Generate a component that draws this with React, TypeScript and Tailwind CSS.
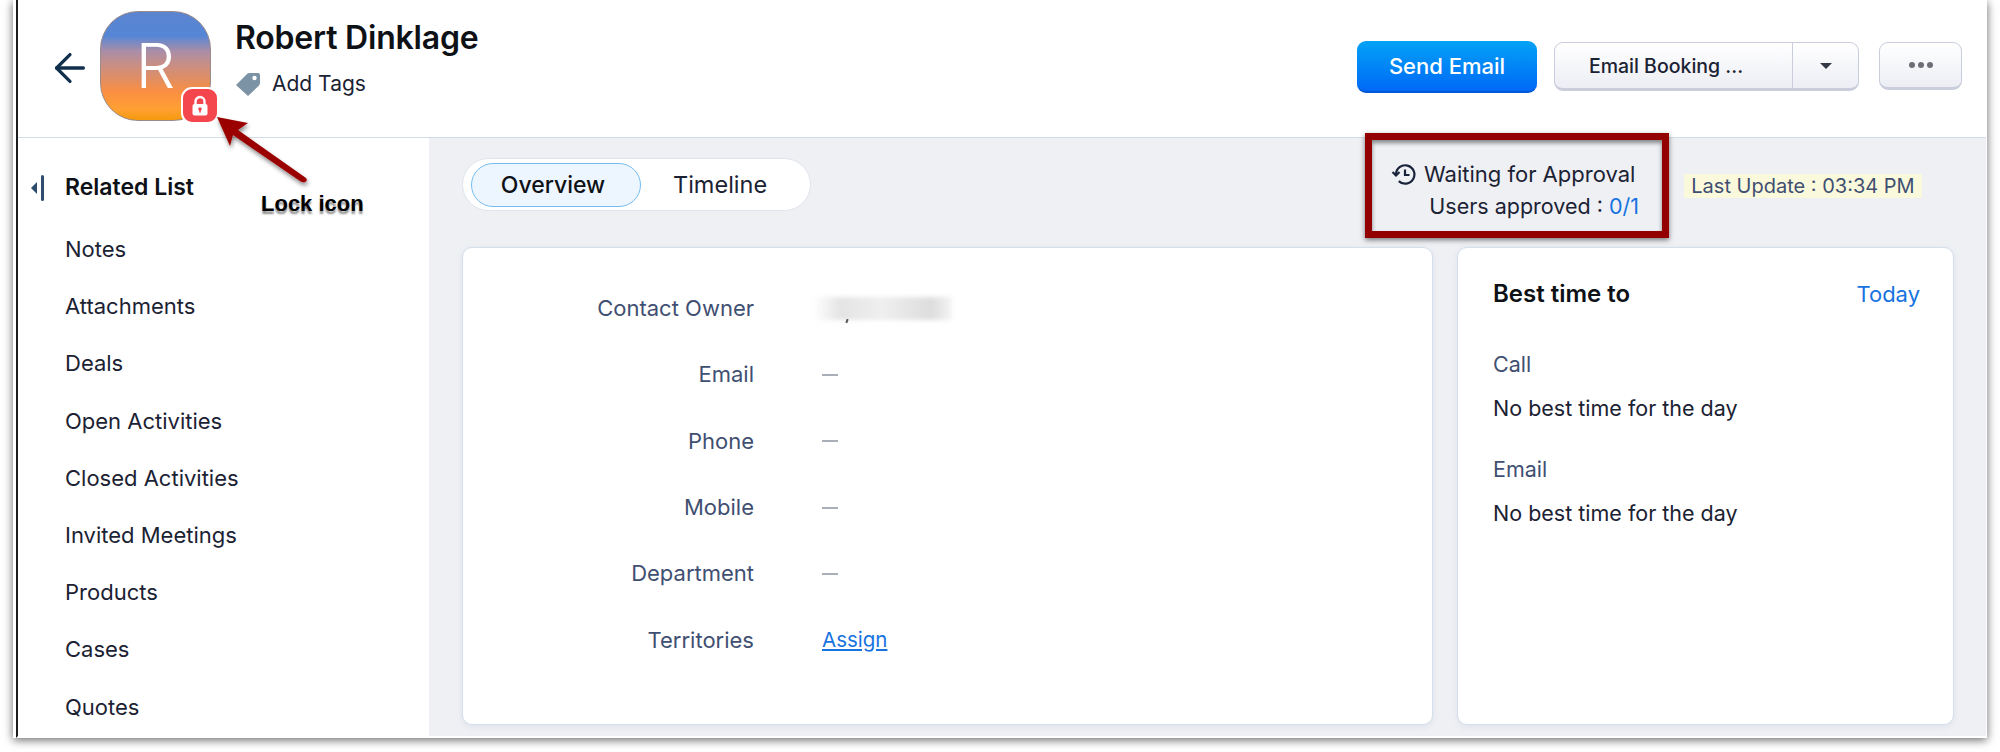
import { ArrowLeft } from "lucide-react";

const relatedItems = [
  "Notes",
  "Attachments",
  "Deals",
  "Open Activities",
  "Closed Activities",
  "Invited Meetings",
  "Products",
  "Cases",
  "Quotes",
];

const fields = [
  { label: "Contact Owner", value: "blur" },
  { label: "Email", value: "—" },
  { label: "Phone", value: "—" },
  { label: "Mobile", value: "—" },
  { label: "Department", value: "—" },
  { label: "Territories", value: "Assign" },
];

function LockBadge() {
  return (
    <div className="absolute left-[80px] top-[75px] flex h-[37px] w-[38px] items-center justify-center rounded-[11px] border-2 border-white bg-[#f4464d]">
      <svg width="18" height="22" viewBox="0 0 18 22">
        <path d="M4.5 10V6.5a4.5 4.5 0 0 1 9 0V10" fill="none" stroke="#fff" strokeWidth="2.4" />
        <rect x="1.5" y="9" width="15" height="11.5" rx="2" fill="#fff" />
        <circle cx="9" cy="14" r="1.8" fill="#f4464d" />
        <rect x="8.2" y="14" width="1.6" height="3.6" fill="#f4464d" />
      </svg>
    </div>
  );
}

function Header() {
  return (
    <div className="flex h-[138px] shrink-0 items-start border-b border-[#d3dde9] bg-white">
      <ArrowLeft className="ml-[29px] mt-[45px] h-[46px] w-[46px] text-[#10304d]" strokeWidth={1.7} />
      <div className="relative ml-[7px] mt-[11px] flex h-[110px] w-[111px] items-center justify-center rounded-[38px] border border-[#9a8a8a] bg-[linear-gradient(180deg,#5b84cf_0%,#5586d6_22%,#a98ea8_36%,#cf8e7c_52%,#e08e62_62%,#fb8f42_74%,#ffa033_90%,#f59a0c_100%)]">
        <span className="font-['Inter',sans-serif] text-[62px] font-light leading-none text-white">R</span>
        <LockBadge />
      </div>
      <div className="ml-[24px] mt-[18px]">
        <div className="font-['Inter',sans-serif] text-[32px] font-semibold leading-[40px] tracking-[-0.2px] text-[#0e1116]">
          Robert Dinklage
        </div>
        <div className="mt-[12px] flex items-center">
          <svg width="26" height="25" viewBox="0 0 26 25" className="mr-[11px]">
            <path d="M1 13 L12 2 Q13 1 15 1 L23 1 Q25 1 25 3 L25 11 Q25 13 23.5 14 L13 24 Z" fill="#7b93a4" />
            <circle cx="19.5" cy="6" r="2.2" fill="#fff" />
          </svg>
          <span className="font-['Inter',sans-serif] text-[21px] leading-[28px] text-[#1b2233]">Add Tags</span>
        </div>
      </div>
      <div className="ml-auto mr-[24px] mt-[41px] flex items-start">
        <button className="h-[52px] w-[180px] rounded-[9px] border-b-2 border-[#0058d6] bg-[linear-gradient(180deg,#03a2f6,#0069f6)] font-['Inter',sans-serif] text-[22px] font-medium text-white">
          Send Email
        </button>
        <div className="ml-[17px] mt-[1px] flex h-[49px] w-[305px] rounded-[9px] border border-b-[3px] border-[#c9cddc] bg-[linear-gradient(180deg,#ffffff,#eceef4)]">
          <div className="flex w-[238px] items-center justify-center border-r border-[#c9cddc] pr-[15px] pt-[2px] font-['Inter',sans-serif] text-[19.5px] font-medium text-[#1b2233]">
            Email Booking ...
          </div>
          <div className="flex flex-1 items-center justify-center">
            <div className="h-0 w-0 border-x-[6px] border-t-[6px] border-x-transparent border-t-[#333a46]" />
          </div>
        </div>
        <div className="ml-[20px] mt-[1px] flex h-[48px] w-[83px] items-center justify-center gap-[3px] rounded-[9px] border border-b-[3px] border-[#c9cddc] bg-[linear-gradient(180deg,#ffffff,#eceef4)]">
          <div className="h-[6px] w-[6px] rounded-full bg-[#6c6f76]" />
          <div className="h-[6px] w-[6px] rounded-full bg-[#6c6f76]" />
          <div className="h-[6px] w-[6px] rounded-full bg-[#6c6f76]" />
        </div>
      </div>
    </div>
  );
}

function Sidebar() {
  return (
    <div className="w-[411px] shrink-0 bg-white font-['Inter',sans-serif]">
      <div className="mt-[36px] flex h-[27px] items-center pl-[13px]">
        <div className="h-0 w-0 border-y-[6px] border-r-[6px] border-y-transparent border-r-[#2c4d6e]" />
        <div className="ml-[4px] h-[26px] w-[3px] rounded-sm bg-[#2c4d6e]" />
        <span className="ml-[21px] text-[23px] font-semibold text-[#0e1116]">Related List</span>
      </div>
      <div className="mt-[20px] pl-[47px]">
        {relatedItems.map((item) => (
          <div key={item} className="flex h-[57.2px] items-center text-[22px] text-[#1b2233]">
            {item}
          </div>
        ))}
      </div>
    </div>
  );
}

function OverviewCard() {
  return (
    <div className="h-[478px] w-[971px] rounded-[10px] border border-[#d3dfec] bg-white pt-[27.5px] shadow-[0_2px_6px_rgba(120,135,170,0.12)]">
      {fields.map((f) => (
        <div key={f.label} className="flex h-[66.3px] items-center font-['Inter',sans-serif] text-[22px]">
          <div className="w-[291px] text-right text-[#3f4f72]">{f.label}</div>
          {f.value === "blur" && (
            <div className="relative ml-[59px] h-[23px] w-[139px]">
              <div className="h-full w-full bg-[linear-gradient(90deg,#ffffff,#e4e4e4_20%,#efefef_50%,#dddddd_85%,#f4f4f4)] blur-[2px]" />
              <div className="absolute left-[33px] top-[22px] h-[4px] w-[2px] rotate-[20deg] bg-[#555]" />
            </div>
          )}
          {f.value === "—" && <div className="ml-[68px] h-[2px] w-[16px] bg-[#a9aeb8]" />}
          {f.value === "Assign" && (
            <div className="ml-[68px] text-[20.5px] text-[#1773e0] underline underline-offset-2">Assign</div>
          )}
        </div>
      ))}
    </div>
  );
}

function BestTimeCard() {
  return (
    <div className="h-[478px] w-[497px] rounded-[10px] border border-[#d3dfec] bg-white pl-[35px] pr-[35px] pt-[28px] font-['Inter',sans-serif] shadow-[0_2px_6px_rgba(120,135,170,0.12)]">
      <div className="flex items-center justify-between">
        <span className="text-[24px] font-semibold text-[#0e1116]">Best time to</span>
        <span className="mr-[-2px] text-[22px] text-[#1773e0]">Today</span>
      </div>
      <div className="mt-[38px] text-[21.5px] leading-[28px] text-[#3f4f72]">Call</div>
      <div className="mt-[16px] text-[21.5px] leading-[28px] text-[#1b2233]">No best time for the day</div>
      <div className="mt-[33px] text-[21.5px] leading-[28px] text-[#3f4f72]">Email</div>
      <div className="mt-[16px] text-[21.5px] leading-[28px] text-[#1b2233]">No best time for the day</div>
    </div>
  );
}

function Main() {
  return (
    <div className="flex-1 bg-[#eef0f4] pl-[33px]">
      <div className="flex h-[109px] items-start font-['Inter',sans-serif]">
        <div className="mt-[20px] flex h-[53px] w-[349px] items-center rounded-full border border-[#dfe3ed] bg-white pl-[8px]">
          <div className="flex h-[44px] w-[170px] items-center justify-center rounded-full border border-[#74bdf0] bg-[#edf6ff] pr-[6px] pt-[1px] text-[23px] font-medium text-[#0e1116]">
            Overview
          </div>
          <div className="ml-[32px] text-[23.5px] text-[#1b2233]">Timeline</div>
        </div>
        <div className="ml-[580px] mt-[20px] w-[248px] leading-[32px] text-[#1b2233]">
          <div className="flex items-center text-[22px]">
            <svg width="25" height="23" viewBox="0 0 25 23" fill="none" stroke="#18233a" strokeWidth="2.2">
              <path d="M5 11.5a9.2 9.2 0 1 1 2.8 6.6" />
              <path d="M1.5 9 L5 12.5 L8.5 9" />
              <path d="M14 6.5V12H18.5" />
            </svg>
            <span className="ml-[8px]">Waiting for Approval</span>
          </div>
          <div className="text-right text-[21.5px]">
            Users approved : <span className="text-[#1773e0]">0/1</span>
          </div>
        </div>
        <div className="ml-[45px] mt-[36px] flex h-[24px] w-[238px] items-center justify-center bg-[#fbf9dc] text-[20px] text-[#3f4f72]">
          Last Update : 03:34 PM
        </div>
      </div>
      <div className="flex gap-[24px]">
        <OverviewCard />
        <BestTimeCard />
      </div>
    </div>
  );
}

function Annotations() {
  return (
    <>
      <svg className="absolute left-[200px] top-[100px]" width="130" height="100" viewBox="0 0 130 100">
        <defs>
          <filter id="arrowShadow" x="-20%" y="-20%" width="150%" height="150%">
            <feDropShadow dx="1" dy="3" stdDeviation="2" floodColor="#000" floodOpacity="0.45" />
          </filter>
        </defs>
        <g filter="url(#arrowShadow)">
          <path d="M17 17 L48 23 L38 30 L106 78 Q108 81 105 82 Q103 83 100 81 L33 35 L30 46 Z" fill="#9b0000" />
        </g>
      </svg>
      <div className="absolute left-[261px] top-[190px] font-['Liberation_Sans',sans-serif] text-[22px] font-bold leading-[28px] text-black [text-shadow:0_3px_2px_rgba(0,0,0,0.45)]">
        Lock icon
      </div>
      <div className="absolute left-[1365px] top-[133px] h-[105px] w-[304px] border-[7px] border-[#930000] shadow-[0_2px_5px_rgba(0,0,0,0.5),inset_0_3px_4px_rgba(0,0,0,0.45)]" />
    </>
  );
}

export default function App() {
  return (
    <div className="relative h-[752px] w-[2000px] overflow-hidden bg-white">
      <div className="ml-[13px] h-[738px] w-[1974px] bg-white pl-[3px] shadow-[0_2px_9px_rgba(0,0,0,0.6)]">
        <div className="flex h-full flex-col border-b-2 border-l-2 border-r border-b-white border-l-[#1c1c1c] border-r-white bg-white">
          <Header />
          <div className="flex min-h-0 flex-1">
            <Sidebar />
            <Main />
          </div>
        </div>
      </div>
      <Annotations />
    </div>
  );
}
